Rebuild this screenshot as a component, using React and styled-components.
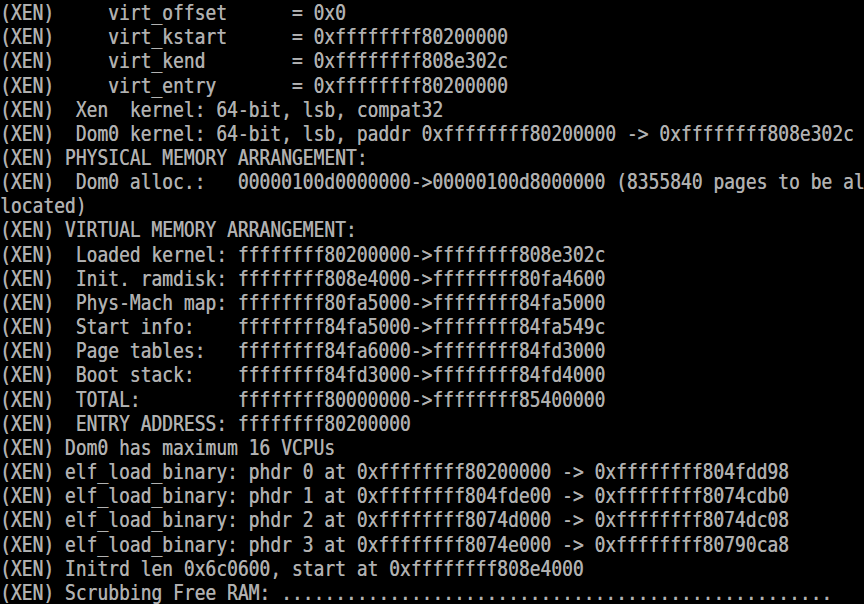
import React from "react";
import styled, { createGlobalStyle } from "styled-components";

const Global = createGlobalStyle`
  html, body { margin: 0; padding: 0; background: #000; }
  body { width: 864px; height: 604px; overflow: hidden; }
`;

const Screen = styled.div`
  width: 864px;
  height: 604px;
  background: #000;
  display: grid;
  grid-template-rows: repeat(25, 24.16px);
  overflow: hidden;
`;

const Line = styled.div`
  display: flex;
  align-items: center;
  white-space: pre;
  font-family: "DejaVu Sans Mono", "Liberation Mono", monospace;
  font-size: 18px;
  line-height: 20px;
  letter-spacing: -0.03px;
  color: #b2b2b2;
`;

const Glyphs = styled.span`
  display: inline-block;
  transform: translateY(0.8px) scaleY(1.14);
  transform-origin: center;
  text-shadow: 0.4px 0 0 rgba(178, 178, 178, 0.8);
`;

const lines = [
  "(XEN)     virt_offset      = 0x0",
  "(XEN)     virt_kstart      = 0xffffffff80200000",
  "(XEN)     virt_kend        = 0xffffffff808e302c",
  "(XEN)     virt_entry       = 0xffffffff80200000",
  "(XEN)  Xen  kernel: 64-bit, lsb, compat32",
  "(XEN)  Dom0 kernel: 64-bit, lsb, paddr 0xffffffff80200000 -> 0xffffffff808e302c",
  "(XEN) PHYSICAL MEMORY ARRANGEMENT:",
  "(XEN)  Dom0 alloc.:   00000100d0000000->00000100d8000000 (8355840 pages to be al",
  "located)",
  "(XEN) VIRTUAL MEMORY ARRANGEMENT:",
  "(XEN)  Loaded kernel: ffffffff80200000->ffffffff808e302c",
  "(XEN)  Init. ramdisk: ffffffff808e4000->ffffffff80fa4600",
  "(XEN)  Phys-Mach map: ffffffff80fa5000->ffffffff84fa5000",
  "(XEN)  Start info:    ffffffff84fa5000->ffffffff84fa549c",
  "(XEN)  Page tables:   ffffffff84fa6000->ffffffff84fd3000",
  "(XEN)  Boot stack:    ffffffff84fd3000->ffffffff84fd4000",
  "(XEN)  TOTAL:         ffffffff80000000->ffffffff85400000",
  "(XEN)  ENTRY ADDRESS: ffffffff80200000",
  "(XEN) Dom0 has maximum 16 VCPUs",
  "(XEN) elf_load_binary: phdr 0 at 0xffffffff80200000 -> 0xffffffff804fdd98",
  "(XEN) elf_load_binary: phdr 1 at 0xffffffff804fde00 -> 0xffffffff8074cdb0",
  "(XEN) elf_load_binary: phdr 2 at 0xffffffff8074d000 -> 0xffffffff8074dc08",
  "(XEN) elf_load_binary: phdr 3 at 0xffffffff8074e000 -> 0xffffffff80790ca8",
  "(XEN) Initrd len 0x6c0600, start at 0xffffffff808e4000",
  "(XEN) Scrubbing Free RAM: " + ".".repeat(51),
];

export default function App() {
  return (
    <>
      <Global />
      <Screen>
        {lines.map((t, i) => (
          <Line key={i}>
            <Glyphs>{t}</Glyphs>
          </Line>
        ))}
      </Screen>
    </>
  );
}
